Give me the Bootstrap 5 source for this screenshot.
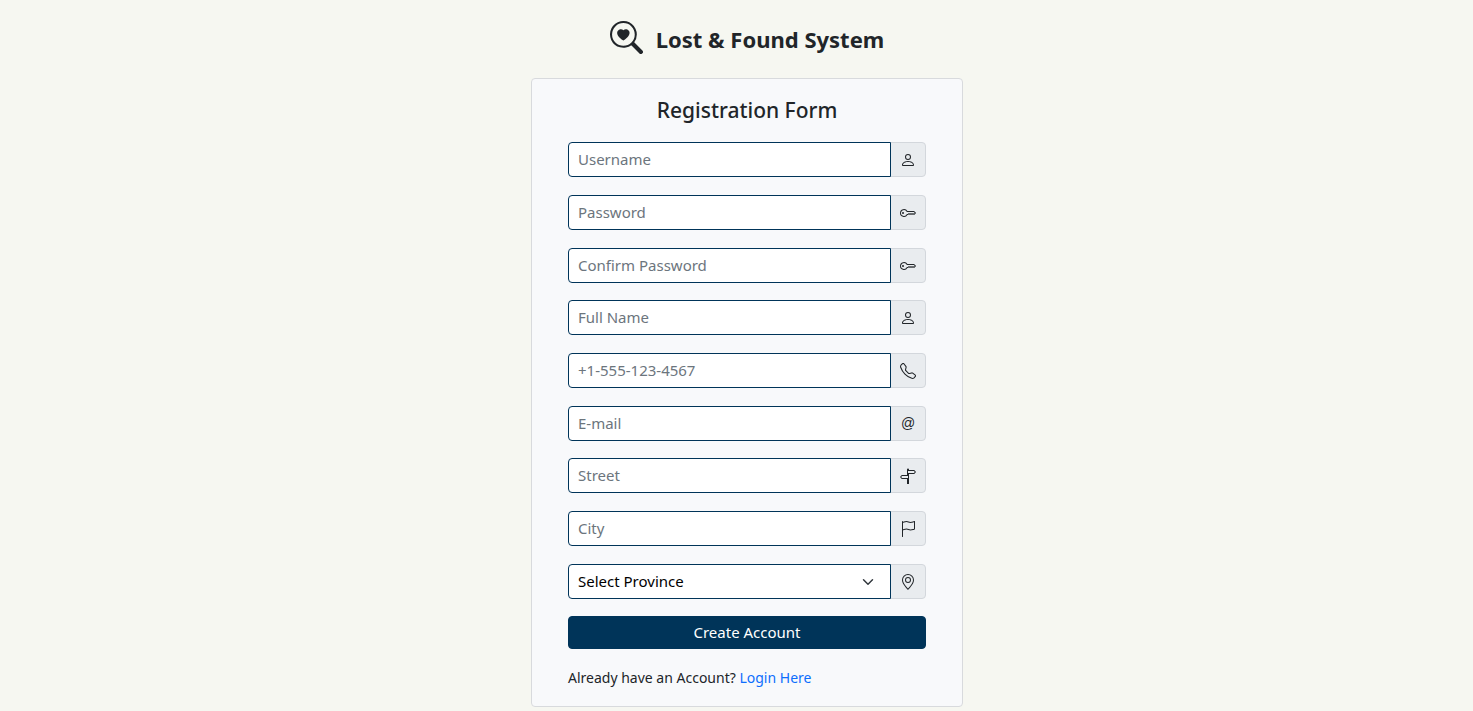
<!DOCTYPE html>
<html lang="en">
<head>
<meta charset="utf-8">
<meta name="viewport" content="width=device-width, initial-scale=1">
<title>Lost &amp; Found System</title>
<link href="https://cdn.jsdelivr.net/npm/bootstrap@5.3.0/dist/css/bootstrap.min.css" rel="stylesheet">
<style>
  :root { --navy: #003459; }
  body { background: #f6f7f1; font-family: "Segoe UI", "Noto Sans", sans-serif; font-size: 15px; }
  .page-wrap { padding: 20px 0 4px 21px; }
  .brand { height: 34px; gap: 13px; margin-bottom: 24px; }
  .brand h1 { font-size: 22px; line-height: 40px; }
  .register-card { max-width: 432px; background: #f8f9fb; --bs-card-border-radius: 4px; --bs-card-border-color: #d8dadd; }
  .register-card .card-body { padding: 16px 36px 17px; }
  .form-title { font-size: 21px; line-height: 30px; margin-bottom: 17px; }
  .field { height: 35px; margin-bottom: 18px; }
  .field:nth-child(3n) { margin-bottom: 17px; }
  .field .form-control, .field .form-select {
    border-color: var(--navy); border-radius: 4px; padding: 0 9px; font-size: 15px; color: #000;
  }
  .field .form-select { background-position: right 14px center; }
  .field .form-control::placeholder { color: #6c757d; opacity: 1; }
  .field .input-group-text {
    width: 36px; padding: 0; justify-content: center; background: #e9ecef; border-color: #d3d7dc;
    border-radius: 4px; font-family: "Segoe UI", "Liberation Sans", sans-serif; font-size: 14px;
  }
  .btn-navy {
    --bs-btn-bg: var(--navy); --bs-btn-color: #fff; --bs-btn-border-color: var(--navy);
    --bs-btn-hover-bg: #00466f; --bs-btn-hover-color: #fff; --bs-btn-border-radius: 4px;
    --bs-btn-font-size: 15px; height: 33px; padding: 0; margin-bottom: 18px;
  }
  .login-hint { font-size: 14px; line-height: 22px; }
  .login-hint a { color: #0d6efd; }
</style>
</head>
<body>
<main class="page-wrap d-flex flex-column align-items-center">
  <header class="brand d-flex align-items-center">
    <svg width="33" height="33" viewBox="0 0 16 16" fill="currentColor" aria-hidden="true"><path d="M6.5 4.482c1.664-1.673 5.825 1.254 0 5.018-5.825-3.764-1.664-6.69 0-5.018Z"/><path d="M13 6.5a6.471 6.471 0 0 1-1.258 3.844c.04.03.078.062.115.098l3.85 3.85a1 1 0 0 1-1.414 1.414l-3.85-3.85a1.007 1.007 0 0 1-.1-.115h.002A6.5 6.5 0 1 1 13 6.5ZM6.5 12a5.5 5.5 0 1 0 0-11 5.5 5.5 0 0 0 0 11Z"/></svg>
    <h1 class="fw-bold mb-0 pt-1">Lost &amp; Found System</h1>
  </header>

  <section class="card register-card w-100">
    <div class="card-body">
      <h2 class="form-title text-center">Registration Form</h2>
      <form>
        <div class="input-group field">
          <input type="text" class="form-control" placeholder="Username" aria-label="Username">
          <span class="input-group-text"><svg width="16" height="16" viewBox="0 0 16 16" fill="currentColor" aria-hidden="true"><path d="M8 8a3 3 0 1 0 0-6 3 3 0 0 0 0 6Zm2-3a2 2 0 1 1-4 0 2 2 0 0 1 4 0Zm4 8c0 1-1 1-1 1H3s-1 0-1-1 1-4 6-4 6 3 6 4Zm-1-.004c-.001-.246-.154-.986-.832-1.664C11.516 10.68 10.289 10 8 10c-2.29 0-3.516.68-4.168 1.332-.678.678-.83 1.418-.832 1.664h10Z"/></svg></span>
        </div>
        <div class="input-group field">
          <input type="password" class="form-control" placeholder="Password" aria-label="Password">
          <span class="input-group-text"><svg width="16" height="16" viewBox="0 0 16 16" fill="currentColor" aria-hidden="true"><path d="M0 8a4 4 0 0 1 7.465-2H14a.5.5 0 0 1 .354.146l1.5 1.5a.5.5 0 0 1 0 .708l-1.5 1.5a.5.5 0 0 1-.708 0L13 9.207l-.646.647a.5.5 0 0 1-.708 0L11 9.207l-.646.647a.5.5 0 0 1-.708 0L9 9.207l-.646.647A.5.5 0 0 1 8 10h-.535A4 4 0 0 1 0 8zm4-3a3 3 0 1 0 2.712 4.285A.5.5 0 0 1 7.163 9h.63l.853-.854a.5.5 0 0 1 .708 0l.646.647.646-.647a.5.5 0 0 1 .708 0l.646.647.646-.647a.5.5 0 0 1 .708 0l.646.647.793-.793-1-1h-6.63a.5.5 0 0 1-.451-.285A3 3 0 0 0 4 5z"/><path d="M4 8a1 1 0 1 1-2 0 1 1 0 0 1 2 0z"/></svg></span>
        </div>
        <div class="input-group field">
          <input type="password" class="form-control" placeholder="Confirm Password" aria-label="Confirm Password">
          <span class="input-group-text"><svg width="16" height="16" viewBox="0 0 16 16" fill="currentColor" aria-hidden="true"><path d="M0 8a4 4 0 0 1 7.465-2H14a.5.5 0 0 1 .354.146l1.5 1.5a.5.5 0 0 1 0 .708l-1.5 1.5a.5.5 0 0 1-.708 0L13 9.207l-.646.647a.5.5 0 0 1-.708 0L11 9.207l-.646.647a.5.5 0 0 1-.708 0L9 9.207l-.646.647A.5.5 0 0 1 8 10h-.535A4 4 0 0 1 0 8zm4-3a3 3 0 1 0 2.712 4.285A.5.5 0 0 1 7.163 9h.63l.853-.854a.5.5 0 0 1 .708 0l.646.647.646-.647a.5.5 0 0 1 .708 0l.646.647.646-.647a.5.5 0 0 1 .708 0l.646.647.793-.793-1-1h-6.63a.5.5 0 0 1-.451-.285A3 3 0 0 0 4 5z"/><path d="M4 8a1 1 0 1 1-2 0 1 1 0 0 1 2 0z"/></svg></span>
        </div>
        <div class="input-group field">
          <input type="text" class="form-control" placeholder="Full Name" aria-label="Full Name">
          <span class="input-group-text"><svg width="16" height="16" viewBox="0 0 16 16" fill="currentColor" aria-hidden="true"><path d="M8 8a3 3 0 1 0 0-6 3 3 0 0 0 0 6Zm2-3a2 2 0 1 1-4 0 2 2 0 0 1 4 0Zm4 8c0 1-1 1-1 1H3s-1 0-1-1 1-4 6-4 6 3 6 4Zm-1-.004c-.001-.246-.154-.986-.832-1.664C11.516 10.68 10.289 10 8 10c-2.29 0-3.516.68-4.168 1.332-.678.678-.83 1.418-.832 1.664h10Z"/></svg></span>
        </div>
        <div class="input-group field">
          <input type="tel" class="form-control" placeholder="+1-555-123-4567" aria-label="Phone number">
          <span class="input-group-text"><svg width="16" height="16" viewBox="0 0 16 16" fill="currentColor" aria-hidden="true"><path d="M3.654 1.328a.678.678 0 0 0-1.015-.063L1.605 2.3c-.483.484-.661 1.169-.45 1.77a17.568 17.568 0 0 0 4.168 6.608 17.569 17.569 0 0 0 6.608 4.168c.601.211 1.286.033 1.77-.45l1.034-1.034a.678.678 0 0 0-.063-1.015l-2.307-1.794a.678.678 0 0 0-.58-.122l-2.19.547a1.745 1.745 0 0 1-1.657-.459L5.482 8.062a1.745 1.745 0 0 1-.46-1.657l.548-2.19a.678.678 0 0 0-.122-.58L3.654 1.328zM1.884.511a1.745 1.745 0 0 1 2.612.163L6.29 2.98c.329.423.445.974.315 1.494l-.547 2.19a.678.678 0 0 0 .178.643l2.457 2.457a.678.678 0 0 0 .644.178l2.189-.547a1.745 1.745 0 0 1 1.494.315l2.306 1.794c.829.645.905 1.87.163 2.611l-1.034 1.034c-.74.74-1.846 1.065-2.877.702a18.634 18.634 0 0 1-7.01-4.42 18.634 18.634 0 0 1-4.42-7.009c-.362-1.03-.037-2.137.703-2.877L1.885.511z"/></svg></span>
        </div>
        <div class="input-group field">
          <input type="email" class="form-control" placeholder="E-mail" aria-label="E-mail">
          <span class="input-group-text">@</span>
        </div>
        <div class="input-group field">
          <input type="text" class="form-control" placeholder="Street" aria-label="Street">
          <span class="input-group-text"><svg width="16" height="16" viewBox="0 0 16 16" fill="currentColor" aria-hidden="true"><path d="M7 7V1.414a1 1 0 0 1 2 0V2h5a1 1 0 0 1 .8.4l.975 1.3a.5.5 0 0 1 0 .6L14.8 5.6a1 1 0 0 1-.8.4H9v10H7v-5H2a1 1 0 0 1-.8-.4L.225 9.3a.5.5 0 0 1 0-.6L1.2 7.4A1 1 0 0 1 2 7h5zm1 3V8H2l-.75 1L2 10h6zm0-5h6l.75-1L14 3H8v2z"/></svg></span>
        </div>
        <div class="input-group field">
          <input type="text" class="form-control" placeholder="City" aria-label="City">
          <span class="input-group-text"><svg width="16" height="16" viewBox="0 0 16 16" fill="currentColor" aria-hidden="true"><path d="M14.778.085A.5.5 0 0 1 15 .5V8a.5.5 0 0 1-.314.464L14.5 8l.186.464-.003.001-.006.003-.023.009a12.435 12.435 0 0 1-.397.15c-.264.095-.631.223-1.047.35-.816.252-1.879.523-2.71.523-.847 0-1.548-.28-2.158-.525l-.028-.01C7.68 8.71 7.14 8.5 6.5 8.5c-.7 0-1.638.23-2.437.477A19.626 19.626 0 0 0 3 9.342V15.5a.5.5 0 0 1-1 0V.5a.5.5 0 0 1 1 0v.282c.226-.079.496-.17.79-.26C4.606.272 5.67 0 6.5 0c.84 0 1.524.277 2.121.519l.043.018C9.286.788 9.828 1 10.5 1c.7 0 1.638-.23 2.437-.477a19.587 19.587 0 0 0 1.349-.476l.019-.007.004-.002h.001M14 1.221c-.22.078-.48.167-.766.255-.81.252-1.872.523-2.734.523-.886 0-1.592-.286-2.203-.534l-.008-.003C7.662 1.21 7.139 1 6.5 1c-.669 0-1.606.229-2.415.478A21.294 21.294 0 0 0 3 1.845v6.433c.22-.078.48-.167.766-.255C4.576 7.77 5.638 7.5 6.5 7.5c.847 0 1.548.28 2.158.525l.028.01C9.32 8.29 9.86 8.5 10.5 8.5c.668 0 1.606-.229 2.415-.478A21.317 21.317 0 0 0 14 7.655V1.222z"/></svg></span>
        </div>
        <div class="input-group field">
          <select class="form-select" aria-label="Province"><option selected>Select Province</option></select>
          <span class="input-group-text"><svg width="16" height="16" viewBox="0 0 16 16" fill="currentColor" aria-hidden="true"><path d="M12.166 8.94c-.524 1.062-1.234 2.12-1.96 3.07A31.493 31.493 0 0 1 8 14.58a31.481 31.481 0 0 1-2.206-2.57c-.726-.95-1.436-2.008-1.96-3.07C3.304 7.867 3 6.862 3 6a5 5 0 0 1 10 0c0 .862-.305 1.867-.834 2.94zM8 16s6-5.686 6-10A6 6 0 0 0 2 6c0 4.314 6 10 6 10z"/><path d="M8 8a2 2 0 1 1 0-4 2 2 0 0 1 0 4zm0 1a3 3 0 1 0 0-6 3 3 0 0 0 0 6z"/></svg></span>
        </div>
        <button type="submit" class="btn btn-navy w-100">Create Account</button>
      </form>
      <p class="login-hint mb-0">Already have an Account? <a href="#" class="text-decoration-none">Login Here</a></p>
    </div>
  </section>
</main>
<script src="https://cdn.jsdelivr.net/npm/bootstrap@5.3.0/dist/js/bootstrap.bundle.min.js"></script>
</body>
</html>
